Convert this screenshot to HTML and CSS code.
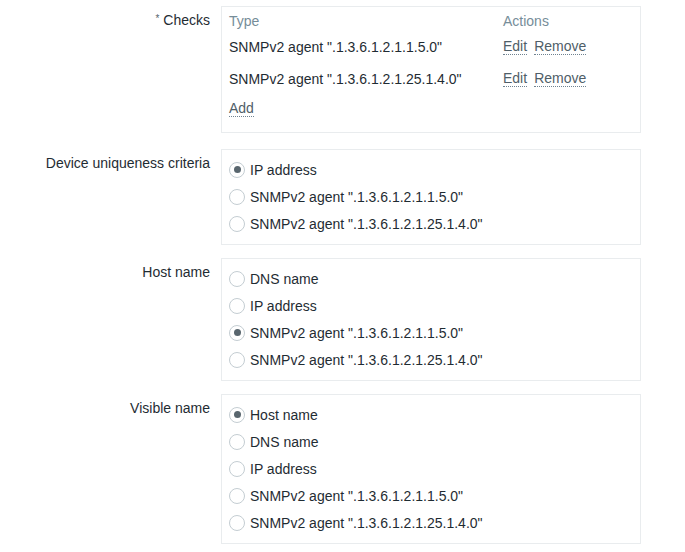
FILE: index.html
```html
<!DOCTYPE html>
<html>
<head>
<meta charset="utf-8">
<link rel="stylesheet" href="styles.css">
</head>
<body>
<div class="form">
  <div class="label label-checks"><span class="req">*</span> Checks</div>
  <div class="box box-checks">
    <div class="tbl">
      <div class="th">Type</div><div class="th">Actions</div>
      <div class="td">SNMPv2 agent ".1.3.6.1.2.1.1.5.0"</div>
      <div class="td acts"><a class="lnk">Edit</a><a class="lnk">Remove</a></div>
      <div class="td">SNMPv2 agent ".1.3.6.1.2.1.25.1.4.0"</div>
      <div class="td acts"><a class="lnk">Edit</a><a class="lnk">Remove</a></div>
      <div class="td add"><a class="lnk">Add</a></div>
    </div>
  </div>

  <div class="label">Device uniqueness criteria</div>
  <div class="box">
    <div class="radio"><span class="dot on"></span>IP address</div>
    <div class="radio"><span class="dot"></span>SNMPv2 agent ".1.3.6.1.2.1.1.5.0"</div>
    <div class="radio"><span class="dot"></span>SNMPv2 agent ".1.3.6.1.2.1.25.1.4.0"</div>
  </div>

  <div class="label">Host name</div>
  <div class="box">
    <div class="radio"><span class="dot"></span>DNS name</div>
    <div class="radio"><span class="dot"></span>IP address</div>
    <div class="radio"><span class="dot on"></span>SNMPv2 agent ".1.3.6.1.2.1.1.5.0"</div>
    <div class="radio"><span class="dot"></span>SNMPv2 agent ".1.3.6.1.2.1.25.1.4.0"</div>
  </div>

  <div class="label">Visible name</div>
  <div class="box">
    <div class="radio"><span class="dot on"></span>Host name</div>
    <div class="radio"><span class="dot"></span>DNS name</div>
    <div class="radio"><span class="dot"></span>IP address</div>
    <div class="radio"><span class="dot"></span>SNMPv2 agent ".1.3.6.1.2.1.1.5.0"</div>
    <div class="radio"><span class="dot"></span>SNMPv2 agent ".1.3.6.1.2.1.25.1.4.0"</div>
  </div>
</div>
</body>
</html>
```

FILE: styles.css
```css
html, body {
  margin: 0;
  background: #ffffff;
}
body {
  padding: 6px 0 0 8px;
  font-family: "Liberation Sans", Arial, sans-serif;
  font-size: 14px;
  color: #1f2c33;
}
.form {
  display: grid;
  grid-template-columns: 202px 420px;
  column-gap: 11px;
  row-gap: 13px;
  align-items: start;
}
.label {
  text-align: right;
  padding-top: 6px;
  line-height: 16px;
}
.label-checks {
  padding-top: 5px;
}
.req {
  font-size: 10px;
  vertical-align: 3px;
  color: #56636b;
}
.box {
  box-sizing: border-box;
  border: 1px solid #e9ecee;
  padding: 6px 7px 7px;
}
.box-checks {
  padding: 4px 7px 9px;
  margin-bottom: 3px;
}
.tbl {
  display: grid;
  grid-template-columns: 274px auto;
}
.th {
  line-height: 20px;
  height: 20px;
  color: #768d99;
}
.td {
  height: 32px;
  display: flex;
  align-items: center;
}
.td.add {
  height: 28px;
}
.acts {
  gap: 7px;
}
.lnk {
  color: #4f5e68;
  text-decoration: none;
  border-bottom: 1px dotted #6f8290;
  line-height: 15px;
}
.radio {
  height: 27px;
  display: flex;
  align-items: center;
  gap: 5px;
}
.dot {
  box-sizing: border-box;
  width: 16px;
  height: 16px;
  border-radius: 50%;
  border: 1px solid #c4cdd2;
  background: #ffffff;
  flex: none;
  display: flex;
  align-items: center;
  justify-content: center;
}
.dot.on::after {
  content: "";
  width: 7px;
  height: 7px;
  border-radius: 50%;
  background: #59666e;
}
```
